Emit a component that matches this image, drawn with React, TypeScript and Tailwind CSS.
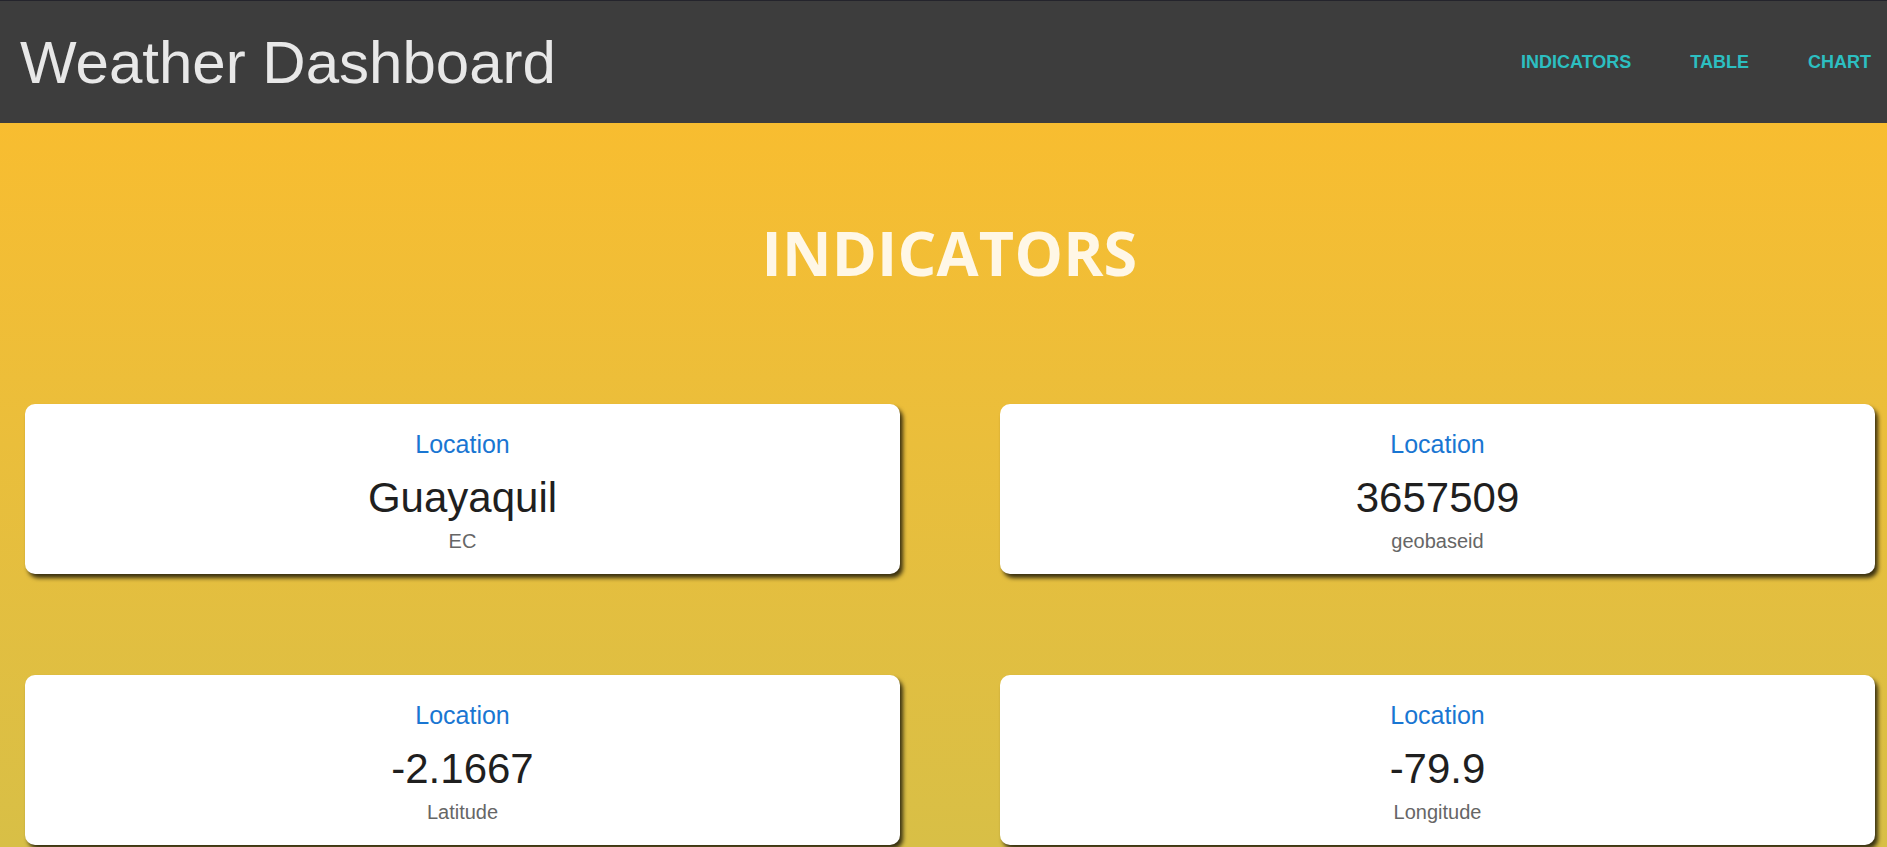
const cards = [
  { title: "Location", value: "Guayaquil", sub: "EC" },
  { title: "Location", value: "3657509", sub: "geobaseid" },
  { title: "Location", value: "-2.1667", sub: "Latitude" },
  { title: "Location", value: "-79.9", sub: "Longitude" },
];

function Indicator({ title, value, sub }: { title: string; value: string; sub: string }) {
  return (
    <div className="flex h-[170px] flex-col items-center rounded-[10px] bg-white pt-[24px] pb-[18px] shadow-[3px_4px_4px_rgba(0,0,0,0.75)]">
      <p className="text-[25px] leading-[32px] text-[#1976d2]">{title}</p>
      <p className="mt-[13px] text-[42px] leading-[50px] text-[#1f1f1f]">{value}</p>
      <p className="mt-[3px] text-[20px] leading-[30px] text-[#666666]">{sub}</p>
    </div>
  );
}

export default function App() {
  return (
    <div className="h-[847px] overflow-hidden font-['Liberation_Sans',Arial,sans-serif]">
      <header className="flex h-[123px] items-center justify-between border-t border-[#24242c] bg-[#3d3d3d] pl-5 pr-4">
        <h1 className="pt-[2px] text-[60px] leading-none text-[#e8e8e8]">Weather Dashboard</h1>
        <nav className="flex items-center gap-[59px] text-[18px] font-bold text-[#2cbfc1]">
          <a href="#indicators">INDICATORS</a>
          <a href="#table">TABLE</a>
          <a href="#chart">CHART</a>
        </nav>
      </header>

      <main className="h-[724px] bg-gradient-to-b from-[#f8bd30] to-[#d8bf46] pt-[99px]">
        <h2 className="pl-[12px] text-center font-['Open_Sans',sans-serif] text-[61px] font-bold leading-none tracking-[0.2px] text-[#fff7e6]">
          INDICATORS
        </h2>

        <div className="mt-[121px] grid grid-cols-2 gap-x-[100px] gap-y-[101px] pl-[25px] pr-[12px]">
          {cards.map((c, i) => (
            <Indicator key={i} {...c} />
          ))}
        </div>
      </main>
    </div>
  );
}
